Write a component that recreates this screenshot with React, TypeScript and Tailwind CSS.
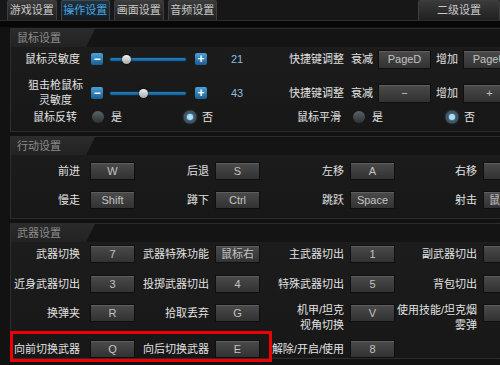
import React from 'react';

const tabs = ['游戏设置', '操作设置', '画面设置', '音频设置'];

const moveRows = [
  [['前进', 'W'], ['后退', 'S'], ['左移', 'A'], ['右移', 'D']],
  [['慢走', 'Shift'], ['蹲下', 'Ctrl'], ['跳跃', 'Space'], ['射击', '鼠标左']],
];

const weaponRows = [
  [['武器切换', '7'], ['武器特殊功能', '鼠标右'], ['主武器切出', '1'], ['副武器切出', '2']],
  [['近身武器切出', '3'], ['投掷武器切出', '4'], ['特殊武器切出', '5'], ['背包切出', 'B']],
  [['换弹夹', 'R'], ['拾取丢弃', 'G'], ['机甲/坦克\n视角切换', 'V'], ['使用技能/坦克烟\n雾弹', 'T']],
  [['向前切换武器', 'Q'], ['向后切换武器', 'E'], ['解除/开启/使用', '8']],
];

function Key({ k, w = 'w-[45px]', h = 'h-[18px]' }: { k: string; w?: string; h?: string }) {
  return (
    <div
      className={`${w} ${h} flex items-center justify-center border border-[#0f0f0f] bg-linear-to-b from-[#4b4b4b] to-[#323232] text-[11px] text-[#c2c2c2] shadow-[inset_0_1px_0_#5e5e5e]`}
    >
      {k}
    </div>
  );
}

function Section({ title, children }: { title: string; children: React.ReactNode }) {
  return (
    <div className="w-[540px] border border-[#2c2c2c] bg-linear-to-b from-[#1d1d1d] to-[#171717]">
      <div className="h-[18px] bg-[#141414]">
        <div className="h-full w-[84px] bg-linear-to-b from-[#2b2b2b] to-[#222] [clip-path:polygon(0_0,84px_0,75px_100%,0_100%)] pl-[6px] text-[11px] leading-[18px] text-[#8c8c8c]">
          {title}
        </div>
      </div>
      {children}
    </div>
  );
}

function KeyRow({ items, className = '' }: { items: string[][]; className?: string }) {
  return (
    <div className={`grid grid-cols-[79px_45px_80px_45px_90px_45px_88px_45px] grid-rows-[18px] items-center ${className}`}>
      {items.map(([label, k], i) => {
        const twoLine = label.includes('\n');
        return (
          <React.Fragment key={i}>
            <div
              className={`whitespace-pre text-right text-[11px] text-[#e2e2e2] ${i === 0 ? 'pr-[10px]' : 'pr-[6px]'} ${
                twoLine ? 'self-start -mt-[1px] leading-[15px]' : 'leading-[14px]'
              }`}
            >
              {label}
            </div>
            <Key k={k} />
          </React.Fragment>
        );
      })}
    </div>
  );
}

function Slider({ pos, value }: { pos: number; value: string }) {
  return (
    <>
      <div className="ml-[1px] flex h-[12px] w-[12px] items-center justify-center rounded-[2px] bg-linear-to-b from-[#4aa2da] to-[#1b5f90] text-[12px] font-bold leading-none text-white">
        −
      </div>
      <div className="relative ml-[6px] h-[5px] w-[78px] rounded-full border border-[#0b2a40] bg-linear-to-b from-[#2a82c0] to-[#185a8a]">
        <div
          className="absolute -top-[3px] h-[9px] w-[9px] rounded-full bg-linear-to-b from-[#f2f2f2] to-[#a8a8a8] shadow-[0_0_2px_#000]"
          style={{ left: pos }}
        />
      </div>
      <div className="ml-[8px] flex h-[12px] w-[12px] items-center justify-center rounded-[2px] bg-linear-to-b from-[#4aa2da] to-[#1b5f90] text-[12px] font-bold leading-none text-white">
        +
      </div>
      <div className="ml-[24px] text-[11px] text-[#8fbcdc]">{value}</div>
    </>
  );
}

function Radio({ on }: { on?: boolean }) {
  return on ? (
    <div className="flex h-[12px] w-[12px] items-center justify-center rounded-full bg-[#3e4a52] shadow-[0_0_2px_#6fb8e0]">
      <div className="h-[6px] w-[6px] rounded-full bg-[#a6e0ff] shadow-[0_0_3px_#8fd6ff]" />
    </div>
  ) : (
    <div className="h-[12px] w-[12px] rounded-full bg-linear-to-b from-[#5c6468] to-[#2c3236]" />
  );
}

function Adjust({ down, up }: { down: string; up: string }) {
  return (
    <div className="flex items-center text-[11px] text-[#e2e2e2]">
      <span>快捷键调整</span>
      <span className="ml-[7px]">衰减</span>
      <div className="ml-[5px]">
        <Key k={down} w="w-[53px]" h="h-[19px]" />
      </div>
      <span className="ml-[5px]">增加</span>
      <div className="ml-[5px]">
        <Key k={up} w="w-[53px]" h="h-[19px]" />
      </div>
    </div>
  );
}

export default function App() {
  return (
    <div className="relative h-[365px] w-[500px] overflow-hidden bg-[#121212] font-['Liberation_Sans','Noto_Sans_CJK_SC',sans-serif]">
      <div className="flex h-[20px] gap-[4px] bg-[#171717] pl-[7px]">
        {tabs.map((t, i) => (
          <div
            key={t}
            className={`flex h-[20px] w-[60px] items-center justify-center rounded-t-[2px] border border-b-0 text-[11px] ${
              i === 1
                ? 'border-[#34495a] bg-linear-to-b from-[#24323c] to-[#141c22] text-[#45a6e4]'
                : 'border-[#3d3d3d] bg-linear-to-b from-[#3a3a3a] to-[#212121] text-[#c8c8c8]'
            }`}
          >
            {t}
          </div>
        ))}
        <div className="ml-[197px] flex h-[20px] w-[82px] shrink-0 items-center justify-center rounded-t-[2px] border border-b-0 border-[#3d3d3d] bg-linear-to-b from-[#3a3a3a] to-[#212121] text-[11px] text-[#c8c8c8]">
          二级设置
        </div>
      </div>
      <div className="h-[1px] bg-[#2e2e2e]" />
      <div className="h-[6px] bg-[#070707]" />

      <div className="flex h-full">
        <div className="w-[5px] bg-[#202020]" />
        <div className="w-[1px] bg-[#363636]" />
        <div className="flex flex-col gap-[4px] pl-[10px] pt-[1px]">
          <Section title="鼠标设置">
            <div className="flex h-[24px] items-center text-[11px] text-[#e2e2e2]">
              <div className="flex w-[278px] items-center">
                <div className="w-[79px] pr-[10px] text-right">鼠标灵敏度</div>
                <Slider pos={12} value="21" />
              </div>
              <Adjust down="PageD" up="PageU" />
            </div>
            <div className="flex h-[38px] items-center pt-[6px] text-[11px] text-[#e2e2e2]">
              <div className="flex w-[278px] items-center">
                <div className="flex w-[79px] justify-end pr-[7px]">
                  <div className="text-center leading-[15px]">
                    狙击枪鼠标
                    <br />
                    灵敏度
                  </div>
                </div>
                <Slider pos={29} value="43" />
              </div>
              <Adjust down="−" up="+" />
            </div>
            <div className="flex h-[16px] items-center text-[11px] text-[#e2e2e2]">
              <div className="flex w-[278px] items-center">
                <div className="w-[79px] pr-[13px] text-right">鼠标反转</div>
                <div className="ml-[2px]">
                  <Radio />
                </div>
                <span className="ml-[7px]">是</span>
                <div className="ml-[62px]">
                  <Radio on />
                </div>
                <span className="ml-[6px]">否</span>
              </div>
              <div className="flex items-center pl-[8px]">
                <span>鼠标平滑</span>
                <div className="ml-[12px]">
                  <Radio />
                </div>
                <span className="ml-[7px]">是</span>
                <div className="ml-[63px]">
                  <Radio on />
                </div>
                <span className="ml-[6px]">否</span>
              </div>
            </div>
            <div className="h-[6px]" />
          </Section>

          <Section title="行动设置">
            <div className="flex flex-col gap-[11px] pb-[9px] pt-[7px]">
              {moveRows.map((r, i) => (
                <KeyRow key={i} items={r} />
              ))}
            </div>
          </Section>

          <Section title="武器设置">
            <div className="pt-[3px]">
              <KeyRow items={weaponRows[0]} />
              <KeyRow items={weaponRows[1]} className="mt-[12px]" />
              <KeyRow items={weaponRows[2]} className="mt-[11px]" />
              <KeyRow items={weaponRows[3]} className="mt-[18px]" />
            </div>
          </Section>
        </div>
      </div>

      <div className="pointer-events-none absolute left-[10px] top-[331px] h-[31px] w-[262px] border-[3px] border-[#ee0000]" />
    </div>
  );
}
